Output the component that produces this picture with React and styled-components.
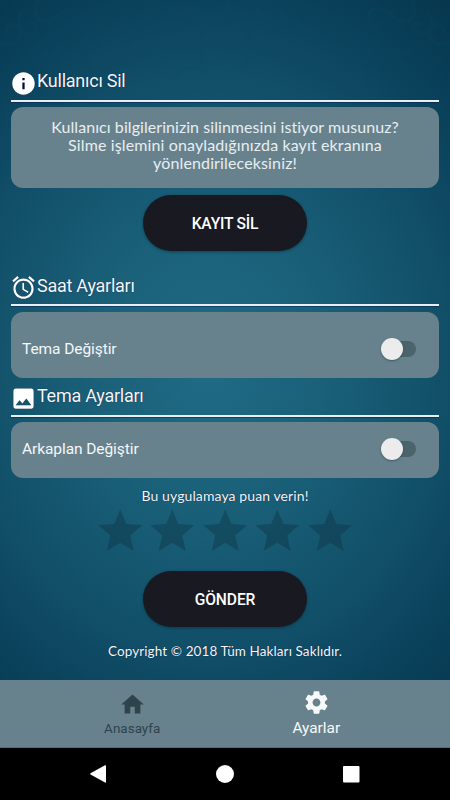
import React from "react";
import styled, { createGlobalStyle } from "styled-components";

const GlobalStyle = createGlobalStyle`
  * { box-sizing: border-box; }
  html, body { margin: 0; padding: 0; background: #000; }
`;

const Screen = styled.div`
  position: relative;
  width: 450px;
  height: 800px;
  overflow: hidden;
  display: flex;
  flex-direction: column;
  font-family: Roboto, "Liberation Sans", sans-serif;
  color: #f5f7f8;
  background: radial-gradient(ellipse 385px 460px at 208px 365px,
    #206b86 0%, #1a6079 30%, #125069 60%, #0a415b 82%, #06374e 100%);
`;

const Ornament = styled.svg`
  position: absolute;
  top: 0;
  left: 0;
  fill: none;
  stroke-linecap: round;
`;

const Content = styled.main`
  position: relative;
  height: 680px;
  padding: 66px 11px 0;
  display: flex;
  flex-direction: column;
`;

const Heading = styled.h2`
  margin: ${(p) => p.$top}px 0 0;
  height: ${(p) => p.$height}px;
  display: flex;
  align-items: flex-start;
  font-size: 18px;
  font-weight: 400;
  line-height: 30px;
  white-space: nowrap;
  letter-spacing: -0.25px;
  text-shadow: 0 0 1px #001445;
  border-bottom: 2px solid #e9eff1;
  box-shadow: 0 1px 0 #00104a66;

  svg {
    flex: none;
    width: 27px;
    height: 27px;
    margin: ${(p) => p.$iconTop}px 0 0 -1px;
    fill: #fff;
    filter: drop-shadow(0 0 0.5px #001445);
  }
`;

const Card = styled.section`
  margin-top: ${(p) => p.$top}px;
  height: ${(p) => p.$height}px;
  border-radius: 12px;
  background: #67828d;
`;

const Message = styled(Card)`
  padding-top: 11px;
  display: flex;
  flex-direction: column;
  align-items: center;
  font-family: Lato, "Open Sans", sans-serif;
  font-size: 16px;
  line-height: 18px;
  color: #e8eef1;
`;

const Line = styled.span`
  white-space: nowrap;
  letter-spacing: ${(p) => p.$spacing}px;
`;

const SettingRow = styled(Card)`
  display: flex;
  align-items: flex-start;
  justify-content: space-between;
  padding: ${(p) => p.$inset}px 23px 0 11px;
  font-size: 15.5px;
  letter-spacing: -0.08px;
  line-height: 24px;
`;

const Toggle = styled.button`
  border: 0;
  padding: 0;
  width: 35px;
  height: 24px;
  display: flex;
  align-items: center;
  background: none;
`;

const Thumb = styled.span`
  z-index: 1;
  width: 22px;
  height: 22px;
  flex: none;
  border-radius: 50%;
  background: #ececec;
  box-shadow: 0 1px 2px #26404b99;
`;

const Track = styled.span`
  flex: none;
  width: 22px;
  height: 16px;
  margin-left: -9px;
  border-radius: 0 8px 8px 0;
  background: #4b636c;
`;

const PillButton = styled.button`
  align-self: center;
  flex: none;
  width: 164px;
  height: 56px;
  margin: ${(p) => p.$top}px 0 0;
  padding: 2px 0 0;
  border: 0;
  border-radius: 28px;
  background: #191922;
  color: #fff;
  font: 500 15.6px/54px Roboto, sans-serif;
  letter-spacing: ${(p) => p.$spacing || 0}px;
  box-shadow: 0 1px 3px #02253388;
`;

const Caption = styled.p`
  margin: ${(p) => p.$top}px 0 0;
  text-align: center;
  white-space: nowrap;
  font-family: Lato, "Open Sans", sans-serif;
  font-size: ${(p) => p.$size}px;
  line-height: 18px;
  letter-spacing: ${(p) => p.$spacing}px;
  text-shadow: 0 0 1px #001445;
`;

const Stars = styled.div`
  display: flex;
  justify-content: center;
  height: 53px;
  margin-top: 0;

  svg {
    width: 52.5px;
    height: 52.5px;
    fill: rgba(12, 48, 62, 0.38);
  }
`;

const TabBar = styled.nav`
  position: relative;
  height: 68px;
  flex: none;
  display: flex;
  justify-content: center;
  padding-right: 1.5px;
  background: #67828d;
  border-bottom: 1px solid #536d78;
`;

const Tab = styled.a`
  width: 184px;
  display: flex;
  flex-direction: column;
  align-items: center;
  padding-top: ${(p) => (p.$active ? 9 : 11)}px;
  color: ${(p) => (p.$active ? "#f8f9fa" : "#2e434c")};
  font-size: ${(p) => (p.$active ? 15.4 : 13.4)}px;
  letter-spacing: ${(p) => (p.$active ? 0 : 0.05)}px;
  line-height: 20px;

  svg {
    width: 27px;
    height: 27px;
    margin-bottom: ${(p) => (p.$active ? 2 : 1)}px;
    fill: currentColor;
  }
`;

const SystemBar = styled.footer`
  position: relative;
  height: 52px;
  flex: none;
  display: flex;
  align-items: center;
  justify-content: space-between;
  padding: 0 90px;
  background: #000;

  svg {
    width: 18px;
    height: 18px;
    fill: #fff;
  }
`;

const paths = {
  info: "M12 2C6.48 2 2 6.48 2 12s4.48 10 10 10 10-4.48 10-10S17.52 2 12 2zm1 15h-2v-6h2v6zm0-8h-2V7h2v2z",
  alarm:
    "M22 5.72l-4.6-3.86-1.29 1.53 4.6 3.86L22 5.72zM7.88 3.39L6.6 1.86 2 5.71l1.29 1.53 4.59-3.85zM12.5 8H11v6l4.75 2.85.75-1.23-4-2.37V8zM12 4c-4.97 0-9 4.03-9 9s4.02 9 9 9c4.97 0 9-4.03 9-9s-4.03-9-9-9zm0 16c-3.87 0-7-3.13-7-7s3.13-7 7-7 7 3.13 7 7-3.13 7-7 7z",
  image:
    "M21 19V5c0-1.1-.9-2-2-2H5c-1.1 0-2 .9-2 2v14c0 1.1.9 2 2 2h14c1.1 0 2-.9 2-2zM8.5 13.5l2.5 3.01L14.5 12l4.5 6H5l3.5-4.5z",
  star: "M12 17.27L18.18 21l-1.64-7.03L22 9.24l-7.19-.61L12 2 9.19 8.63 2 9.24l5.46 4.73L5.82 21z",
  home: "M10 20v-6h4v6h5v-8h3L12 3 2 12h3v8z",
  gear:
    "M19.43 12.98c.04-.32.07-.64.07-.98s-.03-.66-.07-.98l2.11-1.65c.19-.15.24-.42.12-.64l-2-3.46c-.12-.22-.39-.3-.61-.22l-2.49 1c-.52-.4-1.08-.73-1.69-.98l-.38-2.65C14.46 2.18 14.25 2 14 2h-4c-.25 0-.46.18-.49.42l-.38 2.65c-.61.25-1.17.59-1.69.98l-2.49-1c-.23-.09-.49 0-.61.22l-2 3.46c-.13.22-.07.49.12.64l2.11 1.65c-.04.32-.07.65-.07.98s.03.66.07.98l-2.11 1.65c-.19.15-.24.42-.12.64l2 3.46c.12.22.39.3.61.22l2.49-1c.52.4 1.08.73 1.69.98l.38 2.65c.03.24.24.42.49.42h4c.25 0 .46-.18.49-.42l.38-2.65c.61-.25 1.17-.59 1.69-.98l2.49 1c.23.09.49 0 .61-.22l2-3.46c.12-.22.07-.49-.12-.64l-2.11-1.65zM12 15.5c-1.93 0-3.5-1.57-3.5-3.5s1.57-3.5 3.5-3.5 3.5 1.57 3.5 3.5-1.57 3.5-3.5 3.5z",
};

const Icon = ({ name }) => (
  <svg viewBox="0 0 24 24" aria-hidden="true">
    {name === "info" && <path d="M10 6h4v12h-4z" fill="#000a3c" />}
    <path d={paths[name]} />
  </svg>
);

const Switch = ({ label }) => (
  <Toggle role="switch" aria-checked="false" aria-label={label}>
    <Thumb />
    <Track />
  </Toggle>
);

const Flourish = () => (
  <g>
    <path d="M0 43c13 4 22-2 20-12s-15-7-14 1M22 12c-8 12 2 25 10 21s3-13-3-9M50 24c10-15 27-20 31-10s-6 15-13 8M39 52c10 6 19-1 21-9M38 0c-6 15 0 24 12 20M88 35c-8 9-9 23 0 30" />
    <path d="M130 41c8-15 24-15 34-24s8-12 2-10M139 38c15-8 24-5 31-9M193 8c0 20-22 30-40 18M203 30c-5 15-2 33 5 38" />
  </g>
);

export default function App() {
  return (
    <>
      <GlobalStyle />
      <Screen>
        <Ornament width="450" height="110" viewBox="0 0 450 110" aria-hidden="true">
          <g stroke="#0c4c6b" strokeOpacity="0.16" strokeWidth="4">
            <Flourish />
            <g transform="translate(450 0) scale(-1 1)">
              <Flourish />
            </g>
            <path d="M228 0c3 15 4 20 0 26M252 0c10 19 20 19 28 26M176 77c8-12 22-13 30-4M90 70c10 18 18 18 26 9" />
          </g>
        </Ornament>
        <Content>
          <Heading $top={0} $height={36} $iconTop={3.5}>
            <Icon name="info" />
            Kullanıcı Sil
          </Heading>
          <Message $top={5} $height={80.5}>
            <Line $spacing={0.06}>Kullanıcı bilgilerinizin silinmesini istiyor musunuz?</Line>
            <Line $spacing={0.13}>Silme işlemini onayladığınızda kayıt ekranına</Line>
            <Line $spacing={0.14}>yönlendirileceksiniz!</Line>
          </Message>
          <PillButton $top={7.5} $spacing={-0.2}>KAYIT SİL</PillButton>

          <Heading $top={20} $height={35} $iconTop={3}>
            <Icon name="alarm" />
            Saat Ayarları
          </Heading>
          <SettingRow $top={5.5} $height={66} $inset={25}>
            Tema Değiştir
            <Switch label="Tema Değiştir" />
          </SettingRow>

          <Heading $top={3.5} $height={36} $iconTop={3.5}>
            <Icon name="image" />
            Tema Ayarları
          </Heading>
          <SettingRow $top={5} $height={55.5} $inset={14.5}>
            Arkaplan Değiştir
            <Switch label="Arkaplan Değiştir" />
          </SettingRow>

          <Caption $top={9} $size={14} $spacing={0.1}>Bu uygulamaya puan verin!</Caption>
          <Stars>
            {[1, 2, 3, 4, 5].map((n) => (
              <Icon key={n} name="star" />
            ))}
          </Stars>
          <PillButton $top={13.5} $spacing={-0.1}>GÖNDER</PillButton>
          <Caption $top={14.5} $size={13.5} $spacing={0.1}>Copyright © 2018 Tüm Hakları Saklıdır.</Caption>
        </Content>
        <TabBar>
          <Tab>
            <Icon name="home" />
            Anasayfa
          </Tab>
          <Tab $active>
            <Icon name="gear" />
            Ayarlar
          </Tab>
        </TabBar>
        <SystemBar>
          <svg viewBox="0 0 18 18"><path d="M0.5 8.2 L15 0.3 Q16 0 16 1 V17 Q16 18 15 17.6 L0.5 9.5 Q0 8.9 0.5 8.2Z" /></svg>
          <svg viewBox="0 0 18 18"><circle cx="9" cy="9" r="9" /></svg>
          <svg viewBox="0 0 18 18"><rect x="1" y="1" width="16.5" height="16.5" rx="1" /></svg>
        </SystemBar>
      </Screen>
    </>
  );
}
